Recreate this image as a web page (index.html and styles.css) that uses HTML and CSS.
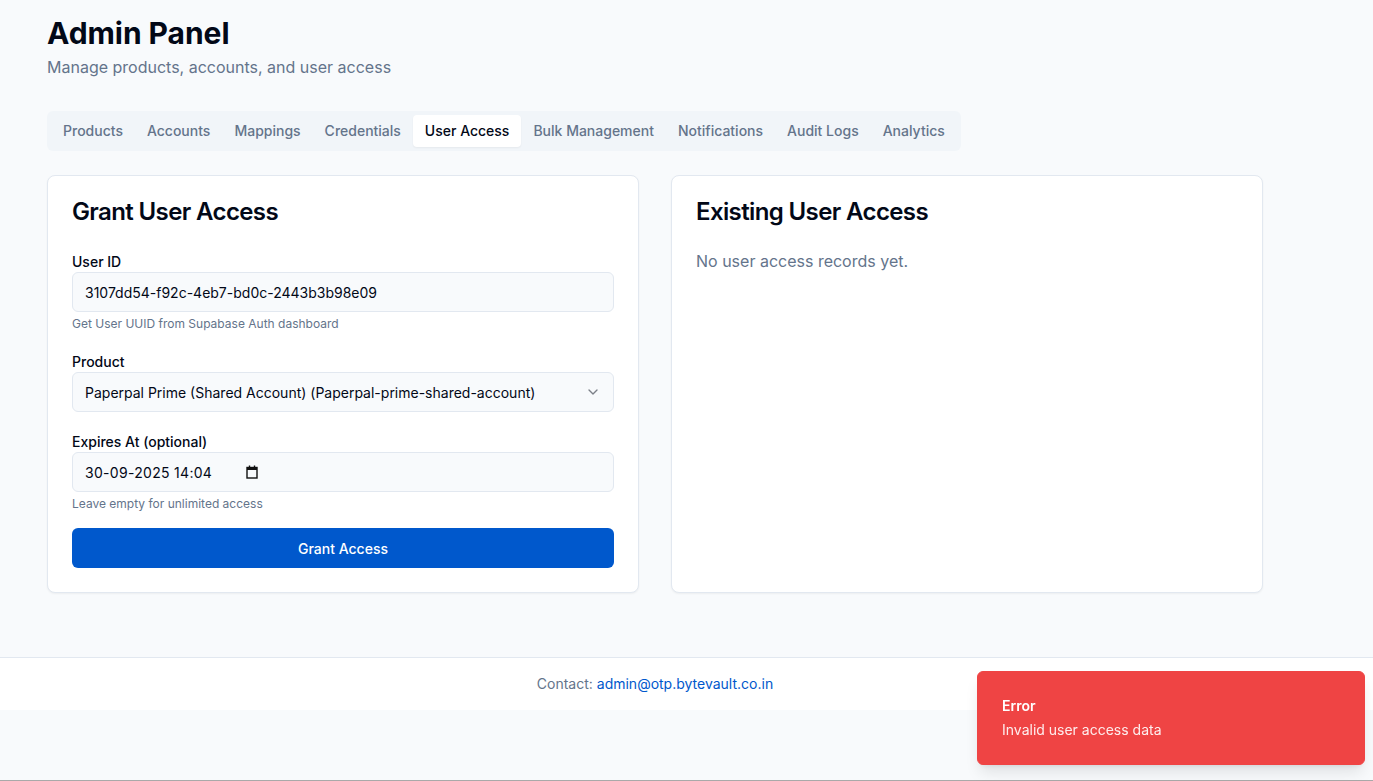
FILE: index.html
```html
<!DOCTYPE html>
<html lang="en">
<head>
<meta charset="utf-8">
<title>Admin Panel</title>
<link rel="stylesheet" href="styles.css">
</head>
<body>
<div class="page">
  <main class="main">
    <header class="header">
      <h1 class="title">Admin Panel</h1>
      <p class="subtitle">Manage products, accounts, and user access</p>
    </header>
    <nav class="tabs">
      <span class="tab">Products</span>
      <span class="tab">Accounts</span>
      <span class="tab">Mappings</span>
      <span class="tab">Credentials</span>
      <span class="tab active">User Access</span>
      <span class="tab">Bulk Management</span>
      <span class="tab">Notifications</span>
      <span class="tab">Audit Logs</span>
      <span class="tab">Analytics</span>
    </nav>
    <section class="grid">
      <div class="card">
        <h2 class="card-title">Grant User Access</h2>
        <div class="card-body">
          <div class="field">
            <label class="label">User ID</label>
            <div class="input">3107dd54-f92c-4eb7-bd0c-2443b3b98e09</div>
            <p class="hint">Get User UUID from Supabase Auth dashboard</p>
          </div>
          <div class="field">
            <label class="label">Product</label>
            <div class="input select">
              <span>Paperpal Prime (Shared Account) (Paperpal-prime-shared-account)</span>
              <svg class="chev" width="16" height="16" viewBox="0 0 24 24" fill="none" stroke="currentColor" stroke-width="2" stroke-linecap="round" stroke-linejoin="round"><path d="m6 9 6 6 6-6"/></svg>
            </div>
          </div>
          <div class="field">
            <label class="label">Expires At (optional)</label>
            <div class="input date">
              <span class="date-text">30-09-2025 14:04</span>
              <svg class="cal" width="12" height="14" viewBox="0 0 12 14"><rect x="1" y="2.5" width="10" height="10.5" fill="none" stroke="#111" stroke-width="1.4"/><rect x="1" y="2.5" width="10" height="2.5" fill="#111"/><rect x="2.8" y="0.5" width="1.4" height="2.5" fill="#111"/><rect x="7.8" y="0.5" width="1.4" height="2.5" fill="#111"/></svg>
            </div>
            <p class="hint">Leave empty for unlimited access</p>
          </div>
          <button class="btn">Grant Access</button>
        </div>
      </div>
      <div class="card">
        <h2 class="card-title">Existing User Access</h2>
        <div class="card-body">
          <p class="empty">No user access records yet.</p>
        </div>
      </div>
    </section>
  </main>
  <footer class="footer">
    <p class="footer-text">Contact: <a class="link" href="#">admin@otp.bytevault.co.in</a></p>
  </footer>
</div>
<div class="toast">
  <div class="toast-title">Error</div>
  <div class="toast-desc">Invalid user access data</div>
</div>
</body>
</html>
```

FILE: styles.css
```css
* { box-sizing: border-box; }
html, body { margin: 0; padding: 0; }
body {
  background: #f8fafc;
  font-family: Inter, "Liberation Sans", sans-serif;
  color: #020817;
}
.page {
  min-height: 781px;
  border-bottom: 1px solid #a9a9a9;
}
.main {
  width: 1216px;
  margin-left: 47px;
  padding-top: 15px;
  padding-bottom: 64px;
}
.title {
  margin: 0;
  font-size: 30px;
  line-height: 36px;
  font-weight: 700;
  letter-spacing: -0.05px;
}
.subtitle {
  margin: 4px 0 0;
  font-size: 16px;
  line-height: 24px;
  color: #64748b;
}
.tabs {
  margin-top: 32px;
  display: inline-flex;
  align-items: center;
  height: 40px;
  padding: 4px;
  background: #f1f5f9;
  border-radius: 6px;
}
.tab {
  display: inline-flex;
  align-items: center;
  height: 32px;
  padding: 0 12px 1px;
  font-size: 14px;
  font-weight: 500;
  color: #64748b;
  border-radius: 4px;
}
.tab.active {
  background: #fff;
  color: #020817;
  box-shadow: 0 1px 2px rgba(0,0,0,0.05);
}
.grid {
  margin-top: 24px;
  display: grid;
  grid-template-columns: 1fr 1fr;
  gap: 32px;
}
.card {
  background: #fff;
  border: 1px solid #e2e8f0;
  border-radius: 8px;
  box-shadow: 0 1px 2px rgba(0,0,0,0.05);
}
.card-title {
  margin: 0;
  padding: 24px 24px 0;
  font-size: 24px;
  line-height: 24px;
  font-weight: 600;
  letter-spacing: -0.62px;
}
.card-body {
  padding: 25px 24px 24px;
  display: flex;
  flex-direction: column;
}
.field {
  display: flex;
  flex-direction: column;
  margin-top: 3px;
  margin-bottom: 17px;
}
.label {
  font-size: 14px;
  line-height: 20px;
  font-weight: 500;
}
.input {
  height: 40px;
  border: 1px solid #e2e8f0;
  background: #f8fafc;
  border-radius: 6px;
  padding: 0 12px;
  display: flex;
  align-items: center;
  font-size: 14px;
  color: #020817;
}
.select { justify-content: space-between; }
.chev { color: #020817; opacity: 0.5; }
.date-text { letter-spacing: 0.3px; }
.cal { margin-left: 34px; }
.hint {
  margin: 4px 0 0;
  font-size: 12px;
  line-height: 16px;
  color: #64748b;
}
.btn {
  margin-top: -1px;
  height: 40px;
  border: 0;
  border-radius: 6px;
  background: #0058cc;
  color: #fff;
  font-family: inherit;
  font-size: 14px;
  font-weight: 500;
}
.empty {
  margin: 0;
  font-size: 16px;
  line-height: 24px;
  color: #64748b;
}
.footer {
  background: #fff;
  border-top: 1px solid #e2e8f0;
  padding: 16px 0;
}
.footer-text {
  width: 1216px;
  margin: 0 0 0 47px;
  text-align: center;
  font-size: 14px;
  line-height: 20px;
  color: #64748b;
}
.link { color: #0058cc; text-decoration: none; }
.toast {
  position: fixed;
  right: 8px;
  bottom: 16px;
  width: 388px;
  padding: 24px 32px 24px 24px;
  border: 1px solid #ef4444;
  border-radius: 6px;
  background: #ef4444;
  color: #fff;
  box-shadow: 0 10px 15px -3px rgba(0,0,0,0.1), 0 4px 6px -4px rgba(0,0,0,0.1);
}
.toast-title {
  font-size: 14px;
  line-height: 20px;
  font-weight: 600;
}
.toast-desc {
  margin-top: 4px;
  font-size: 14px;
  line-height: 20px;
  opacity: 0.9;
}
```
